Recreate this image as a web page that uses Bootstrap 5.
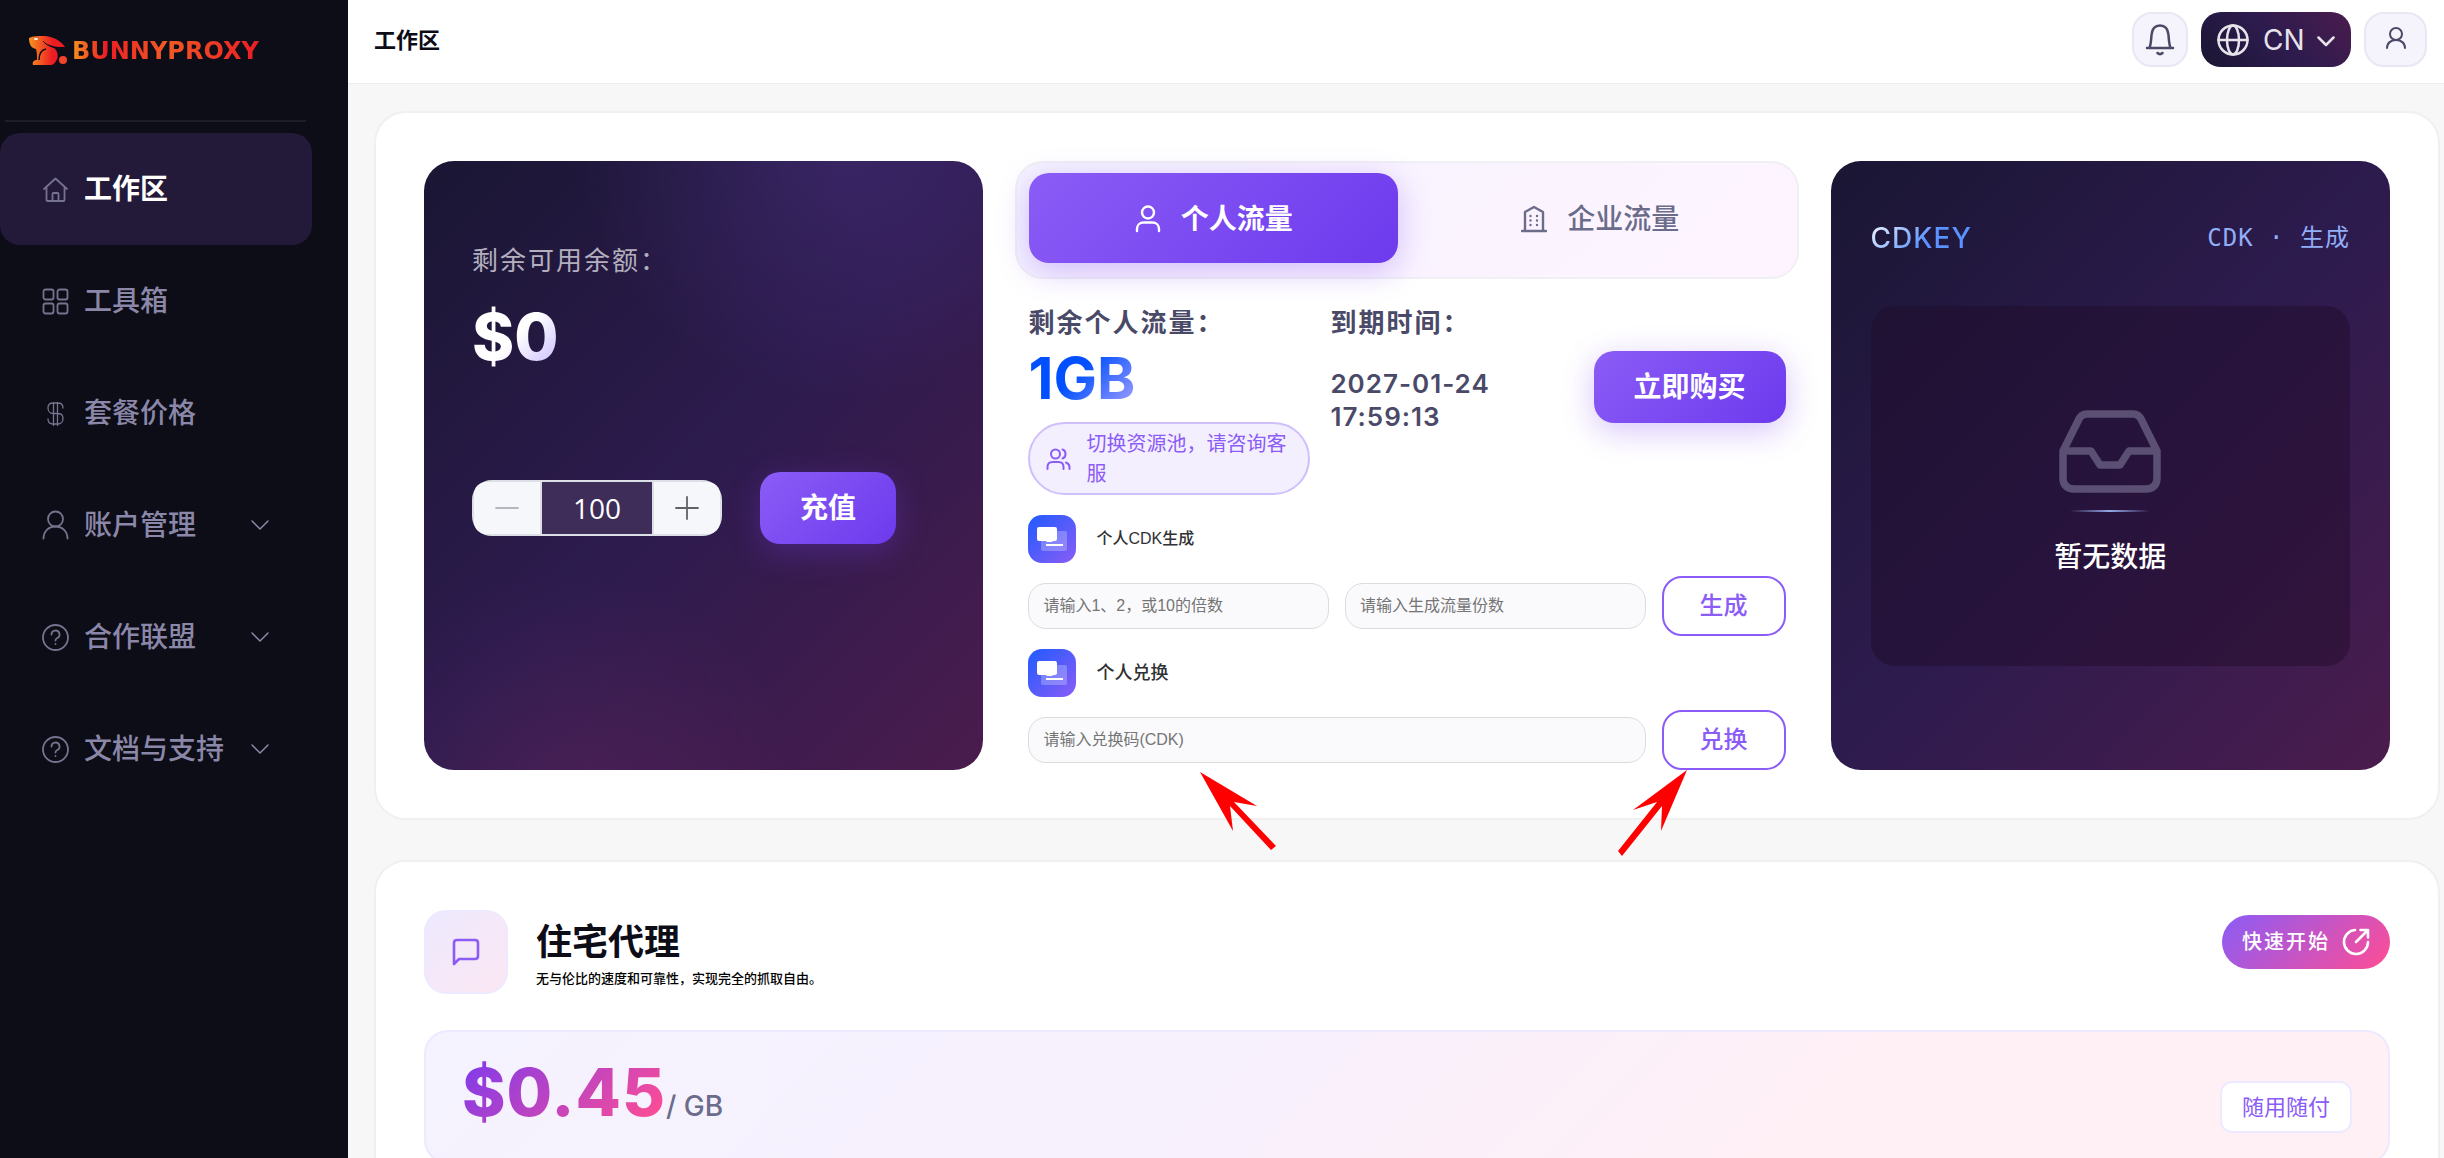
<!DOCTYPE html>
<html lang="zh-CN">
<head>
<meta charset="utf-8">
<meta name="viewport" content="width=device-width, initial-scale=1">
<title>BunnyProxy 工作区</title>
<link href="https://cdn.jsdelivr.net/npm/bootstrap@5.3.0/dist/css/bootstrap.min.css" rel="stylesheet">
<style>
  body { font-family: Inter, "Noto Sans CJK SC", sans-serif; background: #f7f7f7; color: #0d0d17; }
  svg { display: block; flex: none; }
  .ic { fill: none; stroke: currentColor; stroke-linecap: round; stroke-linejoin: round; }

  .side { width: 348px; background: #0d0d17; }
  .brand { height: 120px; padding: 35px 28px 0; }
  .brand-name { font: 700 24px/32px "DejaVu Sans", sans-serif; background: linear-gradient(90deg, #f7931e, #ed1c24 18%, #f15a24 50%, #ed1c24); -webkit-background-clip: text; background-clip: text; color: transparent; }
  .side-rule { height: 2px; margin: 0 42px 11px 5px; background: #1e1e28; }
  .side-item { width: 312px; height: 112px; padding: 0 43px 0 42px; border-radius: 20px; color: #8b87a8; font-size: 28px; font-weight: 500; text-decoration: none; gap: 15px; }
  .side-item.active { background: #221a38; color: #fff; font-weight: 700; }
  .side-item svg { color: #76738e; }
  .side-item .chev { color: #8b87a8; }

  .topbar { height: 84px; padding: 0 17px 4px 26px; gap: 13px; border-bottom: 1px solid #eee; background: #fff; }
  .topbar h1 { font-size: 22px; line-height: 32px; font-weight: 700; }
  .top-btn { width: 56px; height: 55px; border-radius: 20px; border: 2px solid #e9e7f1; background: #f5f4fc; color: #4a4a68; }
  .top-user { width: 63px; }
  .lang-btn { width: 150px; height: 55px; padding: 0 16px; border: 0; border-radius: 20px; background: linear-gradient(45deg, #1a1633, #2d1b4e 50%, #4a1c4d); color: #e6e4ea; font-size: 28px; }
  .lang-name { margin-left: 14px; }

  .content-area { padding: 27px 4px 0 26px; }
  .panel { border: 2px solid #f0f0f0; border-radius: 32px; background: #fff; padding: 48px; }
  .trio { display: grid; grid-template-columns: 1fr 1.4fr 1fr; gap: 32px; }
  .dark { border-radius: 30px; background: linear-gradient(135deg, #1a1633, #2d1b4e 50%, #4a1c4d); }
  .dark-balance { padding: 80px 48px; background: radial-gradient(circle at 75% -5%, rgba(139,92,246,.18), transparent 35%), radial-gradient(circle at 25% 105%, rgba(236,72,153,.1), transparent 30%), linear-gradient(135deg, #1a1633, #2d1b4e 50%, #4a1c4d); }
  .balance-label { font-size: 26px; line-height: 40px; letter-spacing: 2px; color: #b3afbe; }
  .balance { margin-top: 20px; font-size: 64px; line-height: 72px; font-weight: 800; background: linear-gradient(135deg, #fff 50%, #c4b5fd); -webkit-background-clip: text; background-clip: text; color: transparent; }
  .recharge { margin-top: 99px; gap: 38px; }
  .stepper { width: 250px; height: 56px; border: 2px solid #dcdfe6; border-radius: 20px; }
  .stepper button { width: 66px; border: 0; border-radius: 12px 0 0 12px; background: #f5f7fa; color: #606266; }
  .stepper button:last-child { border-radius: 0 12px 12px 0; }
  .stepper button:first-child { color: #b4b7bd; }
  .stepper input { border: 2px solid #dcdfe6; border-width: 0 2px; border-radius: 0; background: #3e2c59; color: #fff; font-size: 28px; font-family: "Open Sans", sans-serif; text-align: center; }
  .go-btn { height: 72px; padding: 0 40px; border: 0; border-radius: 20px; background: linear-gradient(135deg, #8b5cf6, #6d3aed); box-shadow: 0 8px 32px rgba(124,58,237,.3); color: #fff; font-size: 28px; font-weight: 700; }

  .tabs { padding: 10px 12px 14px; border: 2px solid #f0eff3; border-radius: 28px; background: linear-gradient(135deg, #f5f3ff, #fdf4ff 90%); gap: 18px; }
  .tab-btn { height: 90px; padding: 2px 0 0; border: 0; border-radius: 20px; background: transparent; color: #6b6b8a; font-size: 28px; font-weight: 500; gap: 20px; }
  .tab-btn.active { background: linear-gradient(135deg, #8b5cf6, #6d3aed); box-shadow: 0 8px 32px rgba(124,58,237,.3); color: #fff; font-weight: 700; }
  .traffic { padding: 24px 13px 0; }
  .info-label { font-size: 26px; line-height: 40px; letter-spacing: 2px; font-weight: 600; color: #4a4a68; }
  .amount { font-size: 58px; line-height: 70px; font-weight: 700; background: linear-gradient(135deg, #0050ff 45%, #b3a5ff); -webkit-background-clip: text; background-clip: text; color: transparent; }
  .pool { width: 282px; height: 73px; padding: 0 16px; border: 2px solid #cfbffb; border-radius: 37px; background: #f3effe; color: #8b5cf6; font-size: 20px; line-height: 30px; gap: 15px; margin-top: 9px; }
  .expire { width: 190px; margin-top: 24px; font-size: 26px; line-height: 33px; letter-spacing: 1px; font-weight: 600; color: #4a4a68; }
  .col-expire { margin-left: 20px; }
  .cdk-line { margin-top: 13px; }
  .cdk-first { margin-top: 20px; }
  .cdk-icon { width: 48px; height: 48px; border-radius: 14px; background: linear-gradient(135deg, #1f5bff, #8b5cf6); }
  .cdk-name { font: 500 16px/24px "Liberation Sans", "Noto Sans CJK SC", sans-serif; color: #303133; }
  .cdk-name-lg { font-size: 18px; }
  .cdk-input { height: 46px; min-width: 0; padding: 0 14px; border: 1px solid #dcdcdf; border-radius: 18px; background: #fafafc; font: 400 16px/24px "Liberation Sans", "Noto Sans CJK SC", sans-serif; }
  .cdk-input::placeholder { color: #757575; opacity: 1; }
  .line-btn { width: 124px; height: 60px; border: 2px solid #8b5cf6; border-radius: 20px; background: #fff; color: #8b5cf6; font-size: 24px; font-weight: 500; }

  .dark-key { padding: 56px 40px 102px; }
  .key-title { font-size: 28px; line-height: 42px; font-weight: 500; letter-spacing: 1px; background: linear-gradient(135deg, #fff, #5a93ff 55%); -webkit-background-clip: text; background-clip: text; color: transparent; }
  .key-note { font: 400 24px/42px "DejaVu Sans Mono", "Noto Sans CJK SC", monospace; letter-spacing: 1px; color: #92aef7; }
  .key-box { height: 360px; margin-top: 47px; padding-top: 16px; border-radius: 24px; background: rgba(30,12,40,.45); }
  .key-box svg { color: #5b5074; }
  .glow { width: 80px; height: 2px; background: linear-gradient(90deg, transparent, #93a8e6, transparent); }
  .none-text { font-size: 28px; line-height: 42px; font-weight: 500; color: #fff; }

  .proxy { margin-top: 40px; }
  .proxy-icon { width: 84px; height: 84px; border: 2px solid #ede9fe; border-radius: 22px; background: linear-gradient(135deg, #ede9fe, #fce7f3); color: #8b5cf6; }
  .proxy-text { margin-left: 28px; padding-top: 10px; }
  .proxy h2 { margin: 0 0 4px; font-size: 36px; line-height: 44px; font-weight: 700; }
  .proxy-sub { font-size: 13px; line-height: 20px; font-weight: 500; color: #000; }
  .start-btn { height: 54px; margin-top: 5px; padding: 0 20px; border: 0; border-radius: 27px; background: linear-gradient(135deg, #8b5cf6, #ff4d94); color: #fff; font-size: 20px; font-weight: 500; letter-spacing: 2px; gap: 12px; }
  .price-box { height: 134px; margin-top: 36px; padding: 0 36px; border: 2px solid #ede9fe; border-radius: 24px; background: linear-gradient(135deg, #f5f3ff, #f7f0fd 40%, #fff0f6 70%); }
  .price-line { padding-bottom: 10px; }
  .price { font-size: 66px; line-height: 72px; font-weight: 800; letter-spacing: 1px; background: linear-gradient(135deg, #7c3aed, #ff4d94 95%); -webkit-background-clip: text; background-clip: text; color: transparent; }
  .unit { font-size: 28px; font-weight: 500; color: #6b6b8a; }
  .payg { height: 52px; padding: 0 20px; border: 2px solid #ede9fe; border-radius: 12px; background: #fff; color: #8b5cf6; font-size: 22px; line-height: 48px; margin-top: 20px; }

  .pointer { position: absolute; z-index: 3; pointer-events: none; }
  .pointer-code { left: 1200px; top: 770px; }
  .pointer-swap { left: 1616px; top: 768px; }
</style>
<script src="https://cdn.jsdelivr.net/npm/bootstrap@5.3.0/dist/js/bootstrap.bundle.min.js"></script>
</head>
<body>
<div class="d-flex vh-100 overflow-hidden position-relative">

  <aside class="side flex-shrink-0">
    <div class="brand d-flex align-items-start gap-1">
      <svg width="40" height="31" viewBox="0 0 40 31" aria-hidden="true">
        <defs><linearGradient id="bun"><stop offset="0" stop-color="#f7931e"/><stop offset=".65" stop-color="#ed1c24"/></linearGradient></defs>
        <path fill="url(#bun)" d="M1 3C5 1 10 1 16 1c9 0 17 5 21 11-7 0-14 0-20-5 3 3 6 5 9 6 4 3 5 9 2 13-1 2-3 4-5 4H5c-1-3 1-5 4-5 0-4 0-8-1-11C3 13 1 9 1 3z"/>
        <circle cx="35" cy="25" r="4" fill="#f0452a"/>
        <path d="M18 14c-5 1-7 5-7 11" fill="none" stroke="#0d0d17" stroke-width="1.500"/>
        <path d="M15 6c4 5 10 7 18 7" fill="none" stroke="#0d0d17" stroke-width="1"/>
        <ellipse cx="8" cy="4" rx="2" ry="1" fill="#fff"/>
      </svg>
      <span class="brand-name">BUNNYPROXY</span>
    </div>
    <div class="side-rule"></div>
    <nav>
      <a href="#" class="side-item active d-flex align-items-center" aria-current="page">
        <svg class="ic" width="27" height="27" viewBox="0 0 27 27" stroke-width="1.800"><path d="M2 13 13.500 2.500 25 13M4.500 11.500V24a1 1 0 0 0 1 1h16a1 1 0 0 0 1-1V11.500M10.500 25v-7a1 1 0 0 1 1-1h4a1 1 0 0 1 1 1v7"/></svg>
        <span>工作区</span></a>
      <a href="#" class="side-item d-flex align-items-center">
        <svg class="ic" width="27" height="27" viewBox="0 0 27 27" stroke-width="1.800"><rect x="1.500" y="1.500" width="10" height="10" rx="2"/><rect x="15.500" y="1.500" width="10" height="10" rx="2"/><rect x="1.500" y="15.500" width="10" height="10" rx="2"/><rect x="15.500" y="15.500" width="10" height="10" rx="2"/></svg>
        <span>工具箱</span></a>
      <a href="#" class="side-item d-flex align-items-center">
        <svg class="ic" width="27" height="27" viewBox="0 0 27 27" stroke-width="1.300"><path d="M21 8c0-3-2-5-5-5h-5C8 3 6 5 6 8s2 5.500 5 5.500h5c3 0 5 2 5 5s-2 5.500-5 5.500h-5c-3 0-5-2-5-5M11.500 2.500v23M15.500 2.500v23"/></svg>
        <span>套餐价格</span></a>
      <a href="#" class="side-item d-flex align-items-center">
        <svg class="ic" width="27" height="30" viewBox="0 0 27 30" stroke-width="1.800"><circle cx="13.500" cy="9" r="7.500"/><path d="M1.500 28.500c0-7 5-12 12-12s12 5 12 12"/></svg>
        <span>账户管理</span>
        <svg class="ic chev ms-auto" width="18" height="10" viewBox="0 0 18 10" stroke-width="1.500"><path d="m1 1 8 8 8-8"/></svg></a>
      <a href="#" class="side-item d-flex align-items-center">
        <svg class="ic" width="27" height="27" viewBox="0 0 27 27" stroke-width="1.800"><circle cx="13.500" cy="13.500" r="12.500"/><path d="M9.500 10.500a4 4 0 1 1 5.500 3.700c-1 .5-1.500 1-1.500 2.300M13.500 20v.1"/></svg>
        <span>合作联盟</span>
        <svg class="ic chev ms-auto" width="18" height="10" viewBox="0 0 18 10" stroke-width="1.500"><path d="m1 1 8 8 8-8"/></svg></a>
      <a href="#" class="side-item d-flex align-items-center">
        <svg class="ic" width="27" height="27" viewBox="0 0 27 27" stroke-width="1.800"><circle cx="13.500" cy="13.500" r="12.500"/><path d="M9.500 10.500a4 4 0 1 1 5.500 3.700c-1 .5-1.500 1-1.500 2.300M13.500 20v.1"/></svg>
        <span>文档与支持</span>
        <svg class="ic chev ms-auto" width="18" height="10" viewBox="0 0 18 10" stroke-width="1.500"><path d="m1 1 8 8 8-8"/></svg></a>
    </nav>
  </aside>

  <div class="flex-grow-1 d-flex flex-column">
    <header class="topbar d-flex align-items-center flex-shrink-0">
      <h1 class="m-0 me-auto">工作区</h1>
      <button class="top-btn d-flex align-items-center justify-content-center p-0" type="button" aria-label="通知">
        <svg class="ic" width="30" height="34" viewBox="0 0 30 34" stroke-width="2.500"><path d="M2 25h26M4.500 25C6 21 6 18 6.500 12 7 6 10 2.500 15 2.500S23 6 23.500 12c.5 6 .5 9 2 13M12.500 30c1.500 1.500 3.500 1.500 5 0"/></svg>
      </button>
      <button class="lang-btn d-flex align-items-center" type="button">
        <svg class="ic" width="32" height="32" viewBox="0 0 32 32" stroke-width="2.500"><circle cx="16" cy="16" r="14.500"/><ellipse cx="16" cy="16" rx="6" ry="14.500"/><path d="M1.500 16h29"/></svg>
        <span class="lang-name me-auto">CN</span>
        <svg class="ic" width="18" height="14" viewBox="0 0 18 14" stroke-width="2.500"><path d="m1.500 4.500 7.500 7.500 7.500-7.500"/></svg>
      </button>
      <button class="top-btn top-user d-flex align-items-center justify-content-center p-0 pb-1" type="button" aria-label="账户">
        <svg class="ic" width="20" height="22" viewBox="0 0 20 22" stroke-width="2"><circle cx="10" cy="7" r="6"/><path d="M1 21c0-5 4-8 9-8s9 3 9 8"/></svg>
      </button>
    </header>

    <main class="content-area flex-grow-1 overflow-hidden">
      <section class="panel trio">

        <div class="dark dark-balance">
          <div class="balance-label">剩余可用余额：</div>
          <div class="d-inline-block align-top balance">$0</div>
          <div class="recharge d-flex align-items-center">
            <div class="stepper d-flex">
              <button class="d-flex align-items-center justify-content-center flex-shrink-0" type="button" aria-label="减少"><svg class="ic" width="24" height="24" viewBox="0 0 24 24" stroke-width="1.800"><path d="M1 12h22"/></svg></button>
              <input class="w-100 p-0" type="text" value="100" aria-label="充值金额">
              <button class="d-flex align-items-center justify-content-center flex-shrink-0" type="button" aria-label="增加"><svg class="ic" width="24" height="24" viewBox="0 0 24 24" stroke-width="1.800"><path d="M1 12h22M12 1v22"/></svg></button>
            </div>
            <button class="go-btn" type="button">充值</button>
          </div>
        </div>

        <div>
          <div class="tabs d-flex" role="tablist">
            <button class="tab-btn active d-flex align-items-center justify-content-center flex-fill w-50" type="button" role="tab" aria-selected="true">
              <svg class="ic" width="26" height="28" viewBox="0 0 26 28" stroke-width="2.400"><circle cx="13" cy="7.500" r="6"/><path d="M2 26v-2c0-4 3-6.500 6.500-6.500h9C21 17.500 24 20 24 24v2"/></svg>
              <span>个人流量</span></button>
            <button class="tab-btn d-flex align-items-center justify-content-center flex-fill w-50" type="button" role="tab" aria-selected="false">
              <svg class="ic" width="26" height="28" viewBox="0 0 26 28" stroke-width="2.400"><path d="M1 26h24M4 26V7l9-5 9 5v19M9.500 11v.1M16 11v.1M9.500 15.500v.1M16 15.500v.1M9.500 20v.1M16 20v.1"/></svg>
              <span>企业流量</span></button>
          </div>
          <div class="traffic">
            <div class="d-flex">
              <div>
                <div class="info-label">剩余个人流量：</div>
                <div class="d-inline-block align-top amount">1GB</div>
                <div class="pool d-flex align-items-center">
                  <svg class="ic" width="25" height="22" viewBox="0 0 25 22" stroke-width="2"><circle cx="9.500" cy="6" r="4.500"/><path d="M1.500 21v-2c0-3 2-5 5-5h6c3 0 5 2 5 5v2M16.500 1.500c4 1 4 8 0 9M20 14.500c2.500 1 3.500 2.500 3.500 4.500v2"/></svg>
                  <span>切换资源池，请咨询客服</span>
                </div>
              </div>
              <div class="col-expire">
                <div class="info-label">到期时间：</div>
                <div class="expire">2027-01-24 17:59:13</div>
              </div>
              <button class="go-btn ms-auto mt-5" type="button">立即购买</button>
            </div>
            <div class="cdk-first d-flex align-items-center">
              <span class="cdk-icon d-flex align-items-center justify-content-center"><svg width="30" height="26" viewBox="0 0 30 26"><rect x="4" y="5" width="26" height="20" rx="2" fill="#fff" opacity=".25"/><rect x="0" y="1" width="20" height="14" rx="2" fill="#fff"/><path d="M8 14h9l-2 2h-5zM9 18h17v2H9z" fill="#fff"/></svg></span>
              <label class="cdk-name ps-1 ms-3" for="cdk-size">个人CDK生成</label>
            </div>
            <div class="cdk-line d-flex align-items-center gap-3">
              <input id="cdk-size" class="cdk-input flex-fill w-50" type="text" placeholder="请输入1、2，或10的倍数">
              <input class="cdk-input flex-fill w-50" type="text" placeholder="请输入生成流量份数" aria-label="生成流量份数">
              <button class="line-btn flex-shrink-0" type="button">生成</button>
            </div>
            <div class="cdk-line d-flex align-items-center">
              <span class="cdk-icon d-flex align-items-center justify-content-center"><svg width="30" height="26" viewBox="0 0 30 26"><rect x="4" y="5" width="26" height="20" rx="2" fill="#fff" opacity=".25"/><rect x="0" y="1" width="20" height="14" rx="2" fill="#fff"/><path d="M8 14h9l-2 2h-5zM9 18h17v2H9z" fill="#fff"/></svg></span>
              <label class="cdk-name cdk-name-lg ps-1 ms-3" for="cdk-code">个人兑换</label>
            </div>
            <div class="cdk-line d-flex align-items-center gap-3">
              <input id="cdk-code" class="cdk-input flex-fill" type="text" placeholder="请输入兑换码(CDK)">
              <button class="line-btn flex-shrink-0" type="button">兑换</button>
            </div>
          </div>
        </div>

        <div class="dark dark-key">
          <div class="d-flex justify-content-between">
            <span class="key-title">CDKEY</span>
            <span class="key-note">CDK · 生成</span>
          </div>
          <div class="key-box d-flex flex-column align-items-center justify-content-center">
            <svg class="ic" width="102" height="84" viewBox="0 0 102 84" stroke-width="7.500"><path d="M4 41 19 11c2-5 5-7 9-7h46c4 0 7 2 9 7l15 30v27c0 7-4 11-11 11H15C8 79 4 75 4 68zM4 41h28l9 14h20l9-14h28"/></svg>
            <div class="glow mt-3"></div>
            <div class="none-text mt-4">暂无数据</div>
          </div>
        </div>
      </section>

      <section class="panel proxy">
        <div class="d-flex align-items-start">
          <span class="proxy-icon d-flex align-items-center justify-content-center"><svg class="ic" width="28" height="28" viewBox="0 0 28 28" stroke-width="2.600"><path d="M2 26V5c0-2 1-3 3-3h18c2 0 3 1 3 3v13c0 2-1 3-3 3H7z"/></svg></span>
          <div class="proxy-text me-auto">
            <h2>住宅代理</h2>
            <div class="proxy-sub">无与伦比的速度和可靠性，实现完全的抓取自由。</div>
          </div>
          <button class="start-btn d-flex align-items-center" type="button">快速开始
            <svg class="ic" width="28" height="28" viewBox="0 0 28 28" stroke-width="2.600"><path d="M13 2a12 12 0 1 0 13 12M14 14 25.500 2.500M18.500 2H26v7.500"/></svg></button>
        </div>
        <div class="price-box d-flex align-items-center">
          <div class="price-line me-auto d-flex align-items-baseline"><span class="price">$0.45</span><span class="unit">/ GB</span></div>
          <span class="payg">随用随付</span>
        </div>
      </section>
    </main>
  </div>

  <svg class="pointer pointer-code" width="80" height="82" viewBox="0 0 80 82" aria-hidden="true"><path fill="red" d="m0 2 57 34-23-4 42 44-5 4-41-44 3 25z"/></svg>
  <svg class="pointer pointer-swap" width="76" height="90" viewBox="0 0 76 90" aria-hidden="true"><path fill="red" d="M71 2 45 63l1-25L6 88l-4-5 39-49-24 8z"/></svg>
</div>
</body>
</html>
